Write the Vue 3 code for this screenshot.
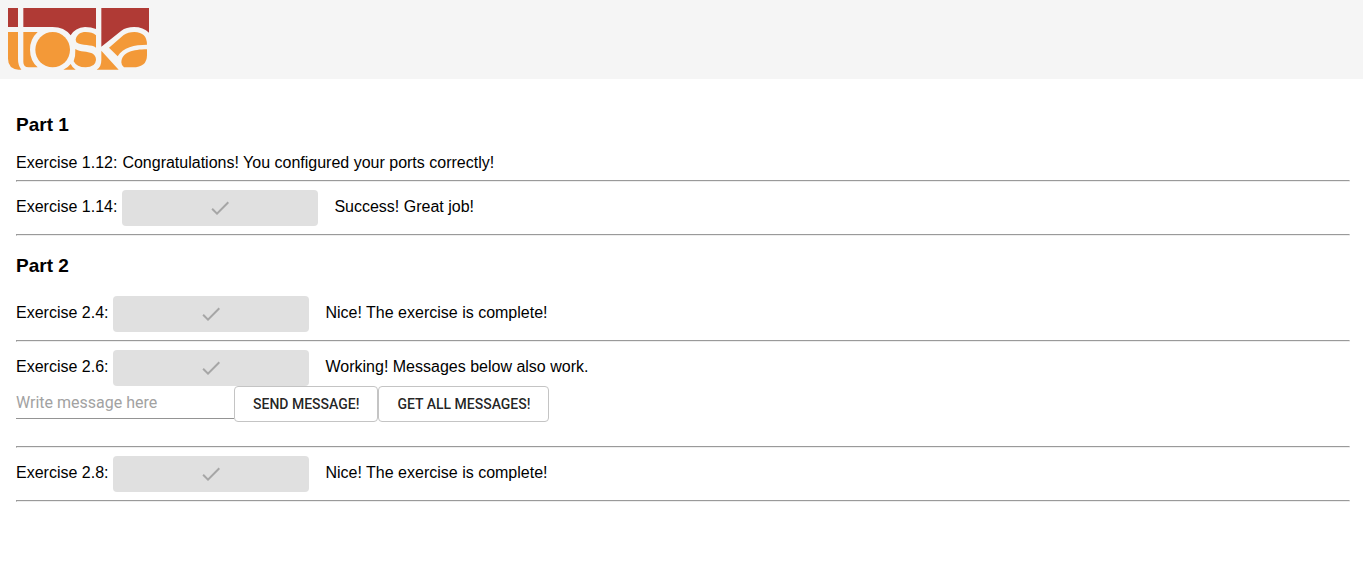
<script setup>
import { ref } from 'vue'

const message = ref('')

const parts = [
  {
    title: 'Part 1',
    exercises: [
      { id: '1.12', text: 'Congratulations! You configured your ports correctly!', button: false },
      { id: '1.14', text: 'Success! Great job!', button: true },
    ],
  },
  {
    title: 'Part 2',
    exercises: [
      { id: '2.4', text: 'Nice! The exercise is complete!', button: true },
      { id: '2.6', text: 'Working! Messages below also work.', button: true, form: true },
      { id: '2.8', text: 'Nice! The exercise is complete!', button: true },
    ],
  },
]
</script>

<template>
  <header class="header">
    <svg class="logo" viewBox="24 24 423 186" role="img" aria-label="toska">
      <g fill="#b03a35">
        <path d="M24 24H54V81H24Z" />
        <path d="M70 24H288V87Q274 81 255 81Q225 83 212 106Q193 81 158 81H70Z" />
        <path d="M304 24H447V98Q430 81 402 81Q379 81 364 92L304 140Z" />
      </g>
      <g fill="#f39938">
        <path d="M24 96H54V178Q54 197 64 209H56Q24 206 24 176Z" />
        <path d="M70 96H113Q90 117 90 149Q90 181 113 202H86Q70 202 70 186Z" />
        <ellipse cx="158" cy="149" rx="52" ry="53" />
        <path d="M227 119C230 103 242 96 257 96Q277 96 288 106V143C277 133 245 138 229 127Z" />
        <path d="M226 147C240 156 263 154 276 160Q288 166 288 180Q286 202 257 202Q230 202 221 184Q227 169 226 147Z" />
        <path d="M190 209Q204 203 212 192Q217 203 227 209Z" />
        <path d="M304 152L356 209H290Q304 202 304 180Z" />
        <path d="M327 143L371 105Q384 96 403 96Q441 97 441 134C403 134 369 142 353 169Z" />
        <path d="M441 148V165Q441 202 398 202H372Q364 197 364 187C365 157 399 148 441 148Z" />
      </g>
    </svg>
  </header>
  <main class="content">
    <section v-for="part in parts" :key="part.title">
      <h3>{{ part.title }}</h3>
      <template v-for="exercise in part.exercises" :key="exercise.id">
        <div class="exercise" :class="{ graded: exercise.button }">
          <span>Exercise {{ exercise.id }}:</span>
          <button v-if="exercise.button" class="check" type="button" disabled :aria-label="`Exercise ${exercise.id} complete`">
            <svg viewBox="0 0 24 24" aria-hidden="true">
              <path d="M9 16.17L4.83 12l-1.42 1.41L9 19 21 7l-1.41-1.41z" />
            </svg>
          </button>
          <span>{{ exercise.text }}</span>
        </div>
        <form v-if="exercise.form" class="message" @submit.prevent>
          <input v-model="message" type="text" aria-label="Message" placeholder="Write message here" />
          <button class="outlined" type="submit">SEND MESSAGE!</button>
          <button class="outlined" type="button">GET ALL MESSAGES!</button>
        </form>
        <hr />
      </template>
    </section>
  </main>
</template>

<style>
body {
  margin: 0;
  background: #fff;
}
</style>

<style scoped>
.header {
  padding: 8px 8px 9px;
  background: #f5f5f5;
}

.logo {
  display: block;
  width: 141px;
  height: 62px;
}

.content {
  padding: 16px 13px 16px 16px;
  color: #000;
  font: 16px/15px "Liberation Sans", Arial, sans-serif;
}

h3 {
  margin: 19px 0;
  font-size: 19px;
  line-height: 22px;
}

.exercise {
  display: flex;
  align-items: center;
  gap: 5px;
}

.exercise span {
  padding-bottom: 2px;
}

.graded span {
  padding-bottom: 4px;
}

.check {
  display: flex;
  align-items: center;
  justify-content: center;
  width: 196px;
  height: 36px;
  margin-right: 11px;
  padding: 0;
  border: 0;
  border-radius: 4px;
  background: #e0e0e0;
}

.check svg {
  width: 24px;
  height: 24px;
  fill: #a6a6a6;
}

hr {
  margin: 8px 0;
  border: 1px solid;
  border-color: #9a9a9a #eee #eee #9a9a9a;
}

.message {
  display: flex;
  align-items: flex-start;
  margin-bottom: 24px;
}

input {
  box-sizing: border-box;
  width: 218px;
  height: 33px;
  padding: 0;
  border: 0;
  border-bottom: 1px solid #949494;
  background: transparent;
  color: rgba(0, 0, 0, 0.87);
  font: 16px Roboto, sans-serif;
}

input::placeholder {
  color: #a2a2a2;
  opacity: 1;
}

.outlined {
  height: 36px;
  padding: 0 18px;
  border: 1px solid #c4c4c4;
  border-radius: 4px;
  background: #fff;
  color: rgba(0, 0, 0, 0.87);
  font: 500 14px/24px Roboto, sans-serif;
  white-space: nowrap;
}
</style>
